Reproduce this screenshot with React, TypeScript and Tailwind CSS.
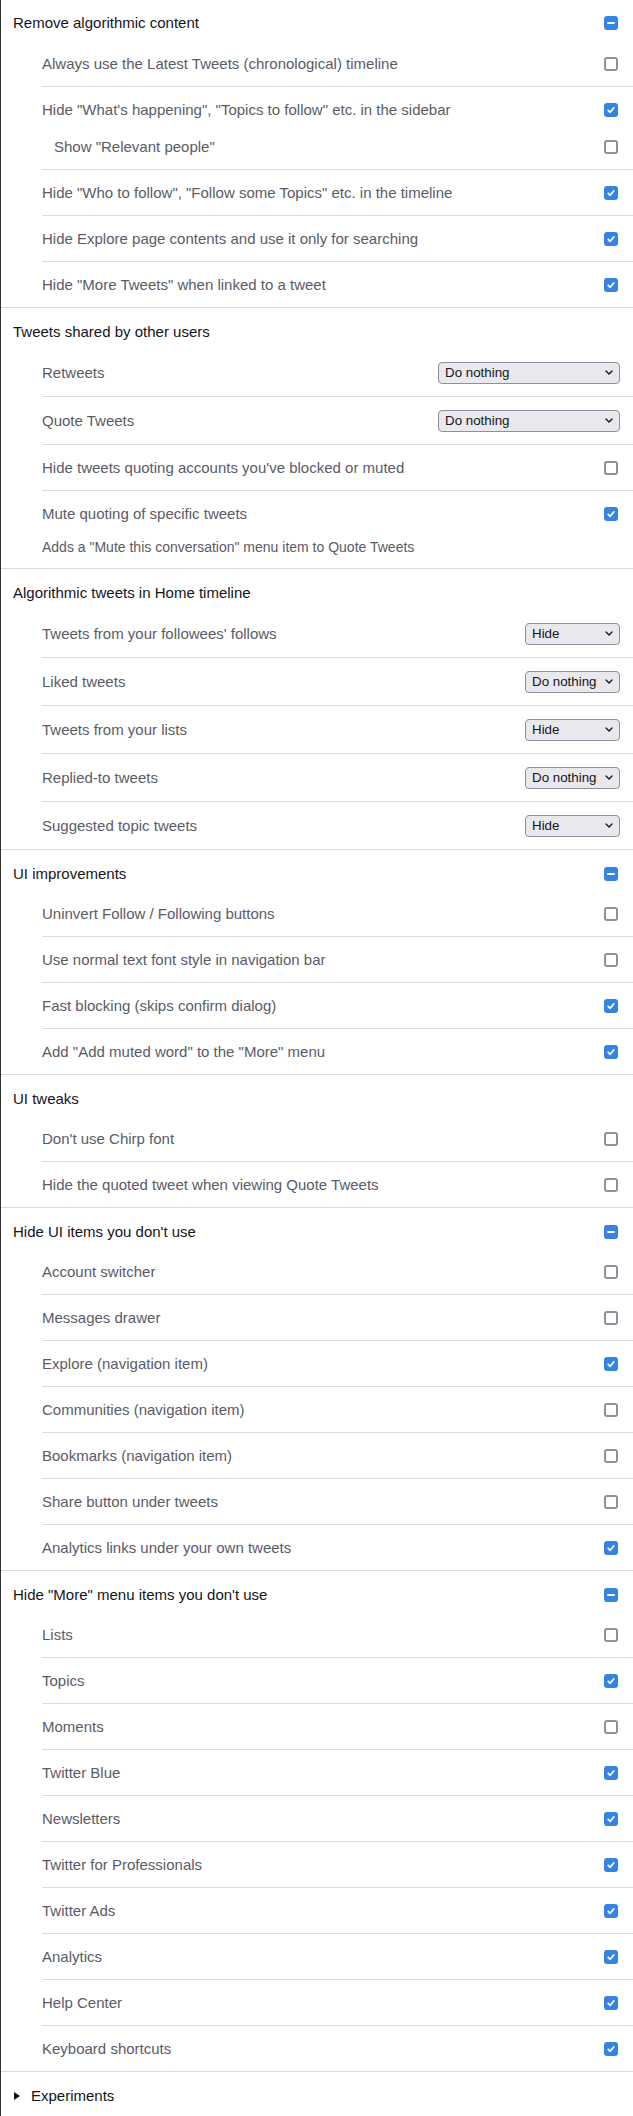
import React from "react";

type State = "on" | "off" | "mixed";

type Row =
  | { kind: "check"; label: string; checked: boolean; nested?: { label: string; checked: boolean }; desc?: string }
  | { kind: "select"; label: string; value: string; wide: boolean };

type Section = { title: string; state?: State; rows: Row[] };

const c = (label: string, checked: boolean, extra?: Partial<{ nested: { label: string; checked: boolean }; desc: string }>): Row => ({
  kind: "check",
  label,
  checked,
  ...extra,
});
const s = (label: string, value: string, wide: boolean): Row => ({ kind: "select", label, value, wide });

const sections: Section[] = [
  {
    title: "Remove algorithmic content",
    state: "mixed",
    rows: [
      c("Always use the Latest Tweets (chronological) timeline", false),
      c('Hide "What\'s happening", "Topics to follow" etc. in the sidebar', true, {
        nested: { label: 'Show "Relevant people"', checked: false },
      }),
      c('Hide "Who to follow", "Follow some Topics" etc. in the timeline', true),
      c("Hide Explore page contents and use it only for searching", true),
      c('Hide "More Tweets" when linked to a tweet', true),
    ],
  },
  {
    title: "Tweets shared by other users",
    rows: [
      s("Retweets", "Do nothing", true),
      s("Quote Tweets", "Do nothing", true),
      c("Hide tweets quoting accounts you've blocked or muted", false),
      c("Mute quoting of specific tweets", true, { desc: 'Adds a "Mute this conversation" menu item to Quote Tweets' }),
    ],
  },
  {
    title: "Algorithmic tweets in Home timeline",
    rows: [
      s("Tweets from your followees' follows", "Hide", false),
      s("Liked tweets", "Do nothing", false),
      s("Tweets from your lists", "Hide", false),
      s("Replied-to tweets", "Do nothing", false),
      s("Suggested topic tweets", "Hide", false),
    ],
  },
  {
    title: "UI improvements",
    state: "mixed",
    rows: [
      c("Uninvert Follow / Following buttons", false),
      c("Use normal text font style in navigation bar", false),
      c("Fast blocking (skips confirm dialog)", true),
      c('Add "Add muted word" to the "More" menu', true),
    ],
  },
  {
    title: "UI tweaks",
    rows: [c("Don't use Chirp font", false), c("Hide the quoted tweet when viewing Quote Tweets", false)],
  },
  {
    title: "Hide UI items you don't use",
    state: "mixed",
    rows: [
      c("Account switcher", false),
      c("Messages drawer", false),
      c("Explore (navigation item)", true),
      c("Communities (navigation item)", false),
      c("Bookmarks (navigation item)", false),
      c("Share button under tweets", false),
      c("Analytics links under your own tweets", true),
    ],
  },
  {
    title: 'Hide "More" menu items you don\'t use',
    state: "mixed",
    rows: [
      c("Lists", false),
      c("Topics", true),
      c("Moments", false),
      c("Twitter Blue", true),
      c("Newsletters", true),
      c("Twitter for Professionals", true),
      c("Twitter Ads", true),
      c("Analytics", true),
      c("Help Center", true),
      c("Keyboard shortcuts", true),
    ],
  },
];

function Box({ state }: { state: State }) {
  if (state === "off") {
    return <span className="block w-[14px] h-[14px] mr-[2px] shrink-0 rounded-[3px] border-2 border-[#8f8f9d] bg-white" />;
  }
  return (
    <span className="flex items-center justify-center w-[14px] h-[14px] mr-[2px] shrink-0 rounded-[3px] bg-[#3584e4]">
      {state === "on" ? (
        <svg width="10" height="10" viewBox="0 0 10 10">
          <path
            d="M2.2 5.3 L4.2 7.3 L7.9 2.8"
            fill="none"
            stroke="white"
            strokeWidth="1.7"
            strokeLinecap="round"
            strokeLinejoin="round"
          />
        </svg>
      ) : (
        <span className="block w-[8px] h-[2px] rounded-full bg-white" />
      )}
    </span>
  );
}

function Select({ value, wide }: { value: string; wide: boolean }) {
  return (
    <div
      className={
        (wide ? "w-[182px] " : "w-[95px] ") +
        "h-[22px] shrink-0 rounded-[4px] border border-[#8f8f9d] bg-[#e9e9ed] flex items-center justify-between pl-[6px] pr-[6px] text-[13.33px] text-[#15141a]"
      }
    >
      <span>{value}</span>
      <svg width="8" height="5" viewBox="0 0 8 5">
        <path d="M1 1 L4 4 L7 1" fill="none" stroke="#15141a" strokeWidth="1.4" strokeLinecap="round" strokeLinejoin="round" />
      </svg>
    </div>
  );
}

function RowView({ row, first }: { row: Row; first: boolean }) {
  if (row.kind === "select") {
    return (
      <div
        className={
          (first ? "h-[47px] " : "h-[48px] border-t border-[#dcdcdc] ") +
          "ml-[41px] pr-[13px] flex items-center justify-between text-[#5b5b66]"
        }
      >
        <span>{row.label}</span>
        <Select value={row.value} wide={row.wide} />
      </div>
    );
  }
  return (
    <div className={first ? "" : "border-t border-[#dcdcdc] ml-[41px]"}>
      <div
        className={
          (first ? "ml-[41px] " : "") + "h-[45px] pr-[13px] flex items-center justify-between text-[#5b5b66]"
        }
      >
        <span>{row.label}</span>
        <Box state={row.checked ? "on" : "off"} />
      </div>
      {row.nested && (
        <div className="h-[37px] pb-[7px] pl-[12px] pr-[13px] flex items-center justify-between text-[#5b5b66]">
          <span>{row.nested.label}</span>
          <Box state={row.nested.checked ? "on" : "off"} />
        </div>
      )}
      {row.desc && <div className="h-[32px] pt-[2px] text-[14px] leading-[18px] text-[#5b5b66]">{row.desc}</div>}
    </div>
  );
}

export default function App() {
  return (
    <div className="min-h-[2116px] bg-white border-l border-[#333333] font-['Liberation_Sans',Arial,sans-serif] text-[15px] leading-5">
      {sections.map((sec, i) => (
        <section key={sec.title} className="border-b border-[#dcdcdc]">
          <div
            className={
              (i === 0 ? "pt-[13px] pb-[8px] " : "pt-[14px] pb-[7px] ") +
              "pl-[12px] pr-[13px] flex items-center justify-between text-[#15141a]"
            }
          >
            <span>{sec.title}</span>
            {sec.state && <Box state={sec.state} />}
          </div>
          {sec.rows.map((r, j) => (
            <RowView key={j} row={r} first={j === 0} />
          ))}
        </section>
      ))}
      <div className="pt-[14px] pb-[10px] pl-[13px] flex items-center gap-[11px] text-[#15141a]">
        <svg width="6" height="8" viewBox="0 0 6 8">
          <path d="M0 0 L6 4 L0 8 Z" fill="#15141a" />
        </svg>
        <span>Experiments</span>
      </div>
    </div>
  );
}
